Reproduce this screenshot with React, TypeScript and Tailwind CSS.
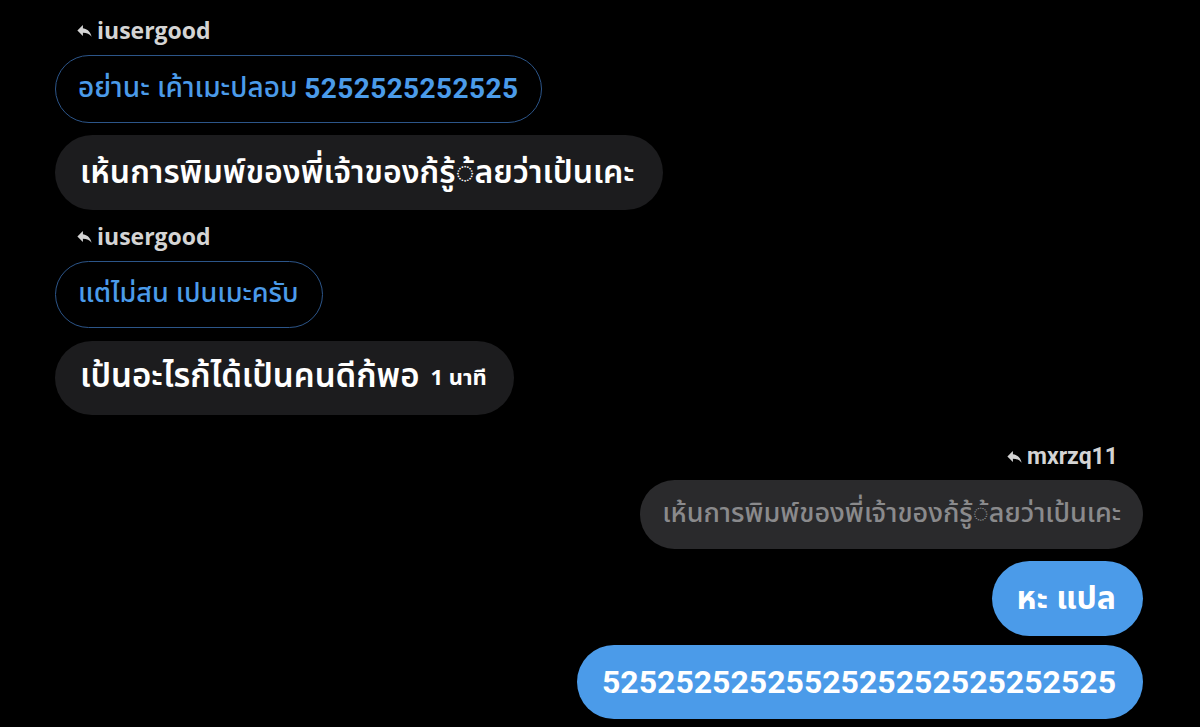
import React from "react";

const thai = { fontFamily: '"Noto Sans Thai", "Noto Sans", Roboto, sans-serif' };
const roboto = { fontFamily: "Roboto, sans-serif" };

function ReplyIcon() {
  return (
    <svg viewBox="0 0 24 24" className="w-[19px] h-[19px] fill-[#d4d4d4]">
      <path d="M10 9V5l-7 7 7 7v-4.1c5 0 8.5 1.6 11 5.1-1-5-4-10-11-11z" />
    </svg>
  );
}

function ReplyHeader({ name, right }: { name: string; right?: boolean }) {
  return (
    <div className={`flex items-center gap-[3px] h-[28px] ${right ? "justify-end pr-[25px]" : "pl-[20px]"}`}>
      <ReplyIcon />
      <span
        className="text-[23px] font-bold text-[#d4d4d4] leading-none"
        style={right ? roboto : { fontFamily: '"Open Sans", "Noto Sans", sans-serif' }}
      >
        {name}
      </span>
    </div>
  );
}

export default function App() {
  return (
    <div className="w-[1200px] h-[727px] bg-black overflow-hidden flex flex-col" style={thai}>
      {/* left side */}
      <div className="flex flex-col items-start pl-[55px] pt-[16px]">
        <ReplyHeader name="iusergood" />
        <div className="mt-[11px] h-[68px] flex items-center pl-[22px] pr-[23px] rounded-full border border-[#2c5589] text-[#4b9be9] text-[28px] font-medium">
          อย่านะ เค้าเมะปลอม
          <span className="ml-[7px] font-bold tracking-[0.4px]" style={roboto}>5252525252525</span>
        </div>
        <div className="mt-[12px] h-[75px] flex items-center pl-[25px] pr-[28px] rounded-full bg-[#1c1c1e] text-white text-[32px] font-semibold">
          เห้นการพิมพ์ของพี่เจ้าของก้รู้◌้ลยว่าเป้นเคะ
        </div>
        <div className="mt-[12px]">
          <ReplyHeader name="iusergood" />
        </div>
        <div className="mt-[11px] h-[67px] flex items-center pl-[22px] pr-[23px] rounded-full border border-[#2c5589] text-[#4b9be9] text-[27px] font-medium">
          แต่ไม่สน เปนเมะครับ
        </div>
        <div className="mt-[13px] h-[74px] flex items-center pl-[25px] pr-[27px] rounded-full bg-[#1c1c1e] text-white text-[33px] font-semibold">
          เป้นอะไรก้ได้เป้นคนดีก้พอ
          <span className="ml-[11px] text-[22px] font-bold">1 นาที</span>
        </div>
      </div>

      {/* right side */}
      <div className="flex flex-col items-end pr-[57px] mt-[27px]">
        <ReplyHeader name="mxrzq11" right />
        <div className="mt-[10px] h-[69px] flex items-center px-[22px] rounded-full bg-[#2a2a2c] text-[#8a8a8c] text-[27px] font-medium">
          เห้นการพิมพ์ของพี่เจ้าของก้รู้◌้ลยว่าเป้นเคะ
        </div>
        <div className="mt-[12px] h-[75px] flex items-center pl-[25px] pr-[27px] rounded-full bg-[#4b9be9] text-white text-[32px] font-bold">
          หะ แปล
        </div>
        <div className="mt-[9px] h-[74px] flex items-center pl-[25px] pr-[27px] rounded-full bg-[#4b9be9] text-white text-[32px] font-bold" style={roboto}>
          5252525252552525252525252525
        </div>
      </div>
    </div>
  );
}
